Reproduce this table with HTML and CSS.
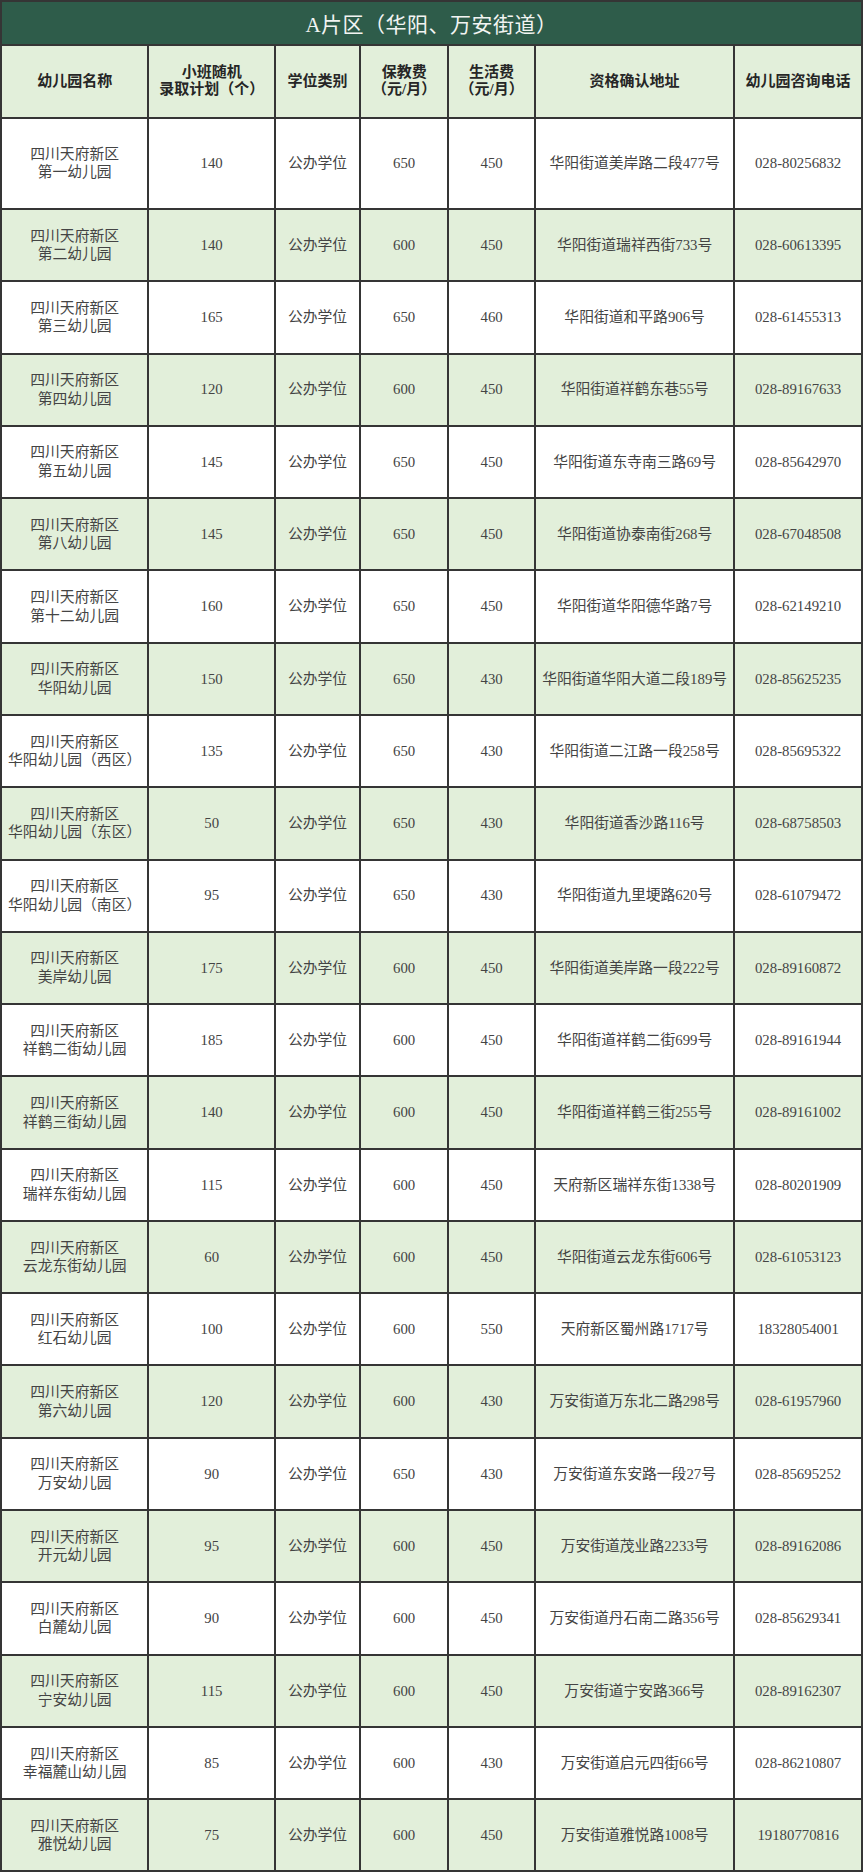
FILE: index.html
```html
<!DOCTYPE html>
<html lang="zh-CN">
<head>
<meta charset="utf-8">
<title>A片区（华阳、万安街道）</title>
<link rel="stylesheet" href="styles.css">
</head>
<body>
<div class="sheet">
  <div class="title">A片区（华阳、万安街道）</div>

  <div class="hd">幼儿园名称</div>
  <div class="hd">小班随机<br>录取计划（个）</div>
  <div class="hd">学位类别</div>
  <div class="hd">保教费<br>（元/月）</div>
  <div class="hd">生活费<br>（元/月）</div>
  <div class="hd">资格确认地址</div>
  <div class="hd">幼儿园咨询电话</div>

  <div class="c first">四川天府新区<br>第一幼儿园</div><div class="c first">140</div><div class="c first">公办学位</div><div class="c first">650</div><div class="c first">450</div><div class="c first">华阳街道美岸路二段477号</div><div class="c first">028-80256832</div>

  <div class="c g">四川天府新区<br>第二幼儿园</div><div class="c g">140</div><div class="c g">公办学位</div><div class="c g">600</div><div class="c g">450</div><div class="c g">华阳街道瑞祥西街733号</div><div class="c g">028-60613395</div>

  <div class="c">四川天府新区<br>第三幼儿园</div><div class="c">165</div><div class="c">公办学位</div><div class="c">650</div><div class="c">460</div><div class="c">华阳街道和平路906号</div><div class="c">028-61455313</div>

  <div class="c g">四川天府新区<br>第四幼儿园</div><div class="c g">120</div><div class="c g">公办学位</div><div class="c g">600</div><div class="c g">450</div><div class="c g">华阳街道祥鹤东巷55号</div><div class="c g">028-89167633</div>

  <div class="c">四川天府新区<br>第五幼儿园</div><div class="c">145</div><div class="c">公办学位</div><div class="c">650</div><div class="c">450</div><div class="c">华阳街道东寺南三路69号</div><div class="c">028-85642970</div>

  <div class="c g">四川天府新区<br>第八幼儿园</div><div class="c g">145</div><div class="c g">公办学位</div><div class="c g">650</div><div class="c g">450</div><div class="c g">华阳街道协泰南街268号</div><div class="c g">028-67048508</div>

  <div class="c">四川天府新区<br>第十二幼儿园</div><div class="c">160</div><div class="c">公办学位</div><div class="c">650</div><div class="c">450</div><div class="c">华阳街道华阳德华路7号</div><div class="c">028-62149210</div>

  <div class="c g">四川天府新区<br>华阳幼儿园</div><div class="c g">150</div><div class="c g">公办学位</div><div class="c g">650</div><div class="c g">430</div><div class="c g">华阳街道华阳大道二段189号</div><div class="c g">028-85625235</div>

  <div class="c">四川天府新区<br>华阳幼儿园（西区）</div><div class="c">135</div><div class="c">公办学位</div><div class="c">650</div><div class="c">430</div><div class="c">华阳街道二江路一段258号</div><div class="c">028-85695322</div>

  <div class="c g">四川天府新区<br>华阳幼儿园（东区）</div><div class="c g">50</div><div class="c g">公办学位</div><div class="c g">650</div><div class="c g">430</div><div class="c g">华阳街道香沙路116号</div><div class="c g">028-68758503</div>

  <div class="c">四川天府新区<br>华阳幼儿园（南区）</div><div class="c">95</div><div class="c">公办学位</div><div class="c">650</div><div class="c">430</div><div class="c">华阳街道九里埂路620号</div><div class="c">028-61079472</div>

  <div class="c g">四川天府新区<br>美岸幼儿园</div><div class="c g">175</div><div class="c g">公办学位</div><div class="c g">600</div><div class="c g">450</div><div class="c g">华阳街道美岸路一段222号</div><div class="c g">028-89160872</div>

  <div class="c">四川天府新区<br>祥鹤二街幼儿园</div><div class="c">185</div><div class="c">公办学位</div><div class="c">600</div><div class="c">450</div><div class="c">华阳街道祥鹤二街699号</div><div class="c">028-89161944</div>

  <div class="c g">四川天府新区<br>祥鹤三街幼儿园</div><div class="c g">140</div><div class="c g">公办学位</div><div class="c g">600</div><div class="c g">450</div><div class="c g">华阳街道祥鹤三街255号</div><div class="c g">028-89161002</div>

  <div class="c">四川天府新区<br>瑞祥东街幼儿园</div><div class="c">115</div><div class="c">公办学位</div><div class="c">600</div><div class="c">450</div><div class="c">天府新区瑞祥东街1338号</div><div class="c">028-80201909</div>

  <div class="c g">四川天府新区<br>云龙东街幼儿园</div><div class="c g">60</div><div class="c g">公办学位</div><div class="c g">600</div><div class="c g">450</div><div class="c g">华阳街道云龙东街606号</div><div class="c g">028-61053123</div>

  <div class="c">四川天府新区<br>红石幼儿园</div><div class="c">100</div><div class="c">公办学位</div><div class="c">600</div><div class="c">550</div><div class="c">天府新区蜀州路1717号</div><div class="c">18328054001</div>

  <div class="c g">四川天府新区<br>第六幼儿园</div><div class="c g">120</div><div class="c g">公办学位</div><div class="c g">600</div><div class="c g">430</div><div class="c g">万安街道万东北二路298号</div><div class="c g">028-61957960</div>

  <div class="c">四川天府新区<br>万安幼儿园</div><div class="c">90</div><div class="c">公办学位</div><div class="c">650</div><div class="c">430</div><div class="c">万安街道东安路一段27号</div><div class="c">028-85695252</div>

  <div class="c g">四川天府新区<br>开元幼儿园</div><div class="c g">95</div><div class="c g">公办学位</div><div class="c g">600</div><div class="c g">450</div><div class="c g">万安街道茂业路2233号</div><div class="c g">028-89162086</div>

  <div class="c">四川天府新区<br>白麓幼儿园</div><div class="c">90</div><div class="c">公办学位</div><div class="c">600</div><div class="c">450</div><div class="c">万安街道丹石南二路356号</div><div class="c">028-85629341</div>

  <div class="c g">四川天府新区<br>宁安幼儿园</div><div class="c g">115</div><div class="c g">公办学位</div><div class="c g">600</div><div class="c g">450</div><div class="c g">万安街道宁安路366号</div><div class="c g">028-89162307</div>

  <div class="c">四川天府新区<br>幸福麓山幼儿园</div><div class="c">85</div><div class="c">公办学位</div><div class="c">600</div><div class="c">430</div><div class="c">万安街道启元四街66号</div><div class="c">028-86210807</div>

  <div class="c g">四川天府新区<br>雅悦幼儿园</div><div class="c g">75</div><div class="c g">公办学位</div><div class="c g">600</div><div class="c g">450</div><div class="c g">万安街道雅悦路1008号</div><div class="c g">19180770816</div>
</div>
</body>
</html>
```

FILE: styles.css
```css
html, body {
  margin: 0;
  padding: 0;
  background: #ffffff;
}

.sheet {
  width: 863px;
  box-sizing: border-box;
  display: grid;
  grid-template-columns: 145.3px 124.7px 83px 86.3px 84.7px 197.3px 125.7px;
  grid-template-rows: 41.5px 71.2px 89.3px;
  grid-auto-rows: 70.29px;
  gap: 2px;
  padding: 2px;
  background: #353535;
  font-family: "Liberation Serif", "Noto Sans CJK SC", serif;
}

.title {
  grid-column: 1 / -1;
  background: #2e5c4a;
  color: #f2f4f2;
  font-size: 21px;
  display: flex;
  align-items: center;
  justify-content: center;
  letter-spacing: 0.5px;
}

.hd {
  background: #e2efda;
  color: #262626;
  font-weight: bold;
  font-size: 15px;
  line-height: 17px;
  display: flex;
  align-items: center;
  justify-content: center;
  text-align: center;
}

.c {
  background: #ffffff;
  color: #444444;
  font-size: 14.8px;
  line-height: 18.5px;
  display: flex;
  align-items: center;
  justify-content: center;
  text-align: center;
}

.c.g {
  background: #e2efda;
}
```
